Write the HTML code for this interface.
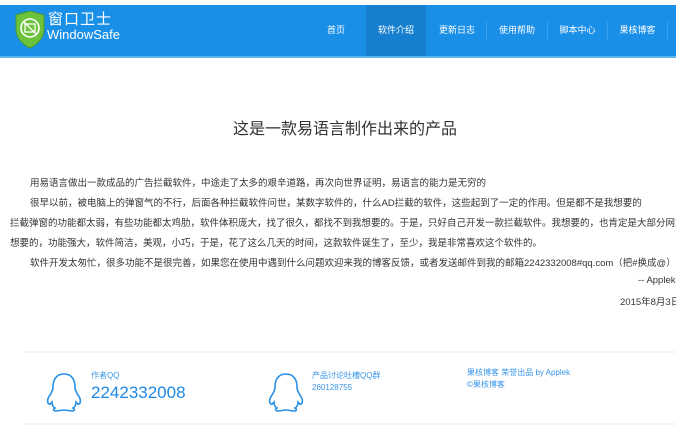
<!DOCTYPE html>
<html><head><meta charset="utf-8"><style>
*{margin:0;padding:0;box-sizing:border-box}
body{width:676px;height:444px;overflow:hidden;background:#fff;font-family:"Liberation Sans","Noto Sans CJK SC",sans-serif;position:relative;color:#333}
.hdr{position:absolute;top:5px;left:0;width:676px;height:53px;background:#1a8fe8;border-bottom:2px solid #5eb2f0}
.nav{position:absolute;top:0;height:51px;font-size:9px;color:#fff;line-height:51px;text-align:center}
.act{background:#167fd0}
.sep{position:absolute;top:17px;width:1px;height:18px;background:#3aa0ee}
.abs{position:absolute;white-space:nowrap}
p.l{position:absolute;font-size:9.5px;color:#333;white-space:nowrap}
</style></head><body>
<div class="hdr">
 <svg class="abs" style="left:14px;top:6px" width="32" height="38" viewBox="0 0 32 38">
  <path d="M2 4 L16 0 L30 4 L30 18 C30 28 22 34 16 37 C10 34 2 28 2 18Z" fill="#6cc23a" stroke="#4a9a2a" stroke-width="1"/>
  <circle cx="16" cy="17" r="9" fill="none" stroke="#fff" stroke-width="1.6"/>
  <rect x="11" y="13" width="10" height="8" fill="none" stroke="#fff" stroke-width="1.3"/>
  <line x1="10" y1="11" x2="22" y2="23" stroke="#fff" stroke-width="1.3"/>
 </svg>
 <div class="abs" style="left:48px;top:3px;font-size:15px;color:#fff;font-family:'Noto Sans CJK SC',sans-serif;letter-spacing:1px">窗口卫士</div>
 <div class="abs" style="left:47px;top:22px;font-size:13px;color:#fff">WindowSafe</div>
 <div class="nav" style="left:316px;width:40px">首页</div>
 <div class="nav act" style="left:366px;width:60px">软件介绍</div>
 <div class="nav" style="left:428px;width:58px">更新日志</div>
 <div class="sep" style="left:486px"></div>
 <div class="nav" style="left:487px;width:60px">使用帮助</div>
 <div class="sep" style="left:547px"></div>
 <div class="nav" style="left:548px;width:59px">脚本中心</div>
 <div class="sep" style="left:607px"></div>
 <div class="nav" style="left:608px;width:59px">果核博客</div>
 <div class="sep" style="left:667px"></div>
</div>
<div class="abs" style="left:0;width:690px;top:115px;text-align:center;font-size:16px;color:#333">这是一款易语言制作出来的产品</div>
<p class="l" style="left:30px;top:175px">用易语言做出一款成品的广告拦截软件，中途走了太多的艰辛道路，再次向世界证明，易语言的能力是无穷的</p>
<p class="l" style="left:30px;top:195px">很早以前，被电脑上的弹窗气的不行，后面各种拦截软件问世，某数字软件的，什么AD拦截的软件，这些起到了一定的作用。但是都不是我想要的</p>
<p class="l" style="left:10px;top:215px">拦截弹窗的功能都太弱，有些功能都太鸡肋，软件体积庞大，找了很久，都找不到我想要的。于是，只好自己开发一款拦截软件。我想要的，也肯定是大部分网友</p>
<p class="l" style="left:10px;top:235px">想要的，功能强大，软件简洁，美观，小巧，于是，花了这么几天的时间，这款软件诞生了，至少，我是非常喜欢这个软件的。</p>
<p class="l" style="left:30px;top:255px">软件开发太匆忙，很多功能不是很完善，如果您在使用中遇到什么问题欢迎来我的博客反馈，或者发送邮件到我的邮箱2242332008#qq.com（把#换成@）</p>
<p class="l" style="left:638px;top:275px">-- Applek</p>
<p class="l" style="left:620px;top:294px">2015年8月3日</p>
<div class="abs" style="left:24px;top:351px;width:652px;height:2px;background:#f1f6fb"></div>
<div class="abs" style="left:24px;top:423px;width:652px;height:2px;background:#f1f6fb"></div>
<svg class="abs" style="left:46px;top:373px" width="36" height="40" viewBox="0 0 36 40">
 <path d="M18 1 C10 1 7 7 7 14 C7 17 6 19 4 22 C1 26 1 30 3 31 C4 32 5 30 6 29 C6 32 7 34 9 35 C7 36 7 38 10 38 C13 38 15 37 18 37 C21 37 23 38 26 38 C29 38 29 36 27 35 C29 34 30 32 30 29 C31 30 32 32 33 31 C35 30 35 26 32 22 C30 19 29 17 29 14 C29 7 26 1 18 1Z" fill="none" stroke="#2a8fe6" stroke-width="1.6"/>
</svg>
<svg class="abs" style="left:268px;top:373px" width="36" height="40" viewBox="0 0 36 40">
 <path d="M18 1 C10 1 7 7 7 14 C7 17 6 19 4 22 C1 26 1 30 3 31 C4 32 5 30 6 29 C6 32 7 34 9 35 C7 36 7 38 10 38 C13 38 15 37 18 37 C21 37 23 38 26 38 C29 38 29 36 27 35 C29 34 30 32 30 29 C31 30 32 32 33 31 C35 30 35 26 32 22 C30 19 29 17 29 14 C29 7 26 1 18 1Z" fill="none" stroke="#2a8fe6" stroke-width="1.6"/>
</svg>
<div class="abs" style="left:91px;top:370px;font-size:8px;color:#3a96e8">作者QQ</div>
<div class="abs" style="left:91px;top:383px;font-size:17px;color:#1e88e5">2242332008</div>
<div class="abs" style="left:312px;top:370px;font-size:8px;color:#3a96e8">产品讨论吐槽QQ群</div>
<div class="abs" style="left:312px;top:383px;font-size:8px;color:#3a96e8">260128755</div>
<div class="abs" style="left:467px;top:367px;font-size:8px;color:#3a96e8">果核博客 荣誉出品 by Applek</div>
<div class="abs" style="left:467px;top:379px;font-size:8px;color:#3a96e8">©果核博客</div>
</body></html>
